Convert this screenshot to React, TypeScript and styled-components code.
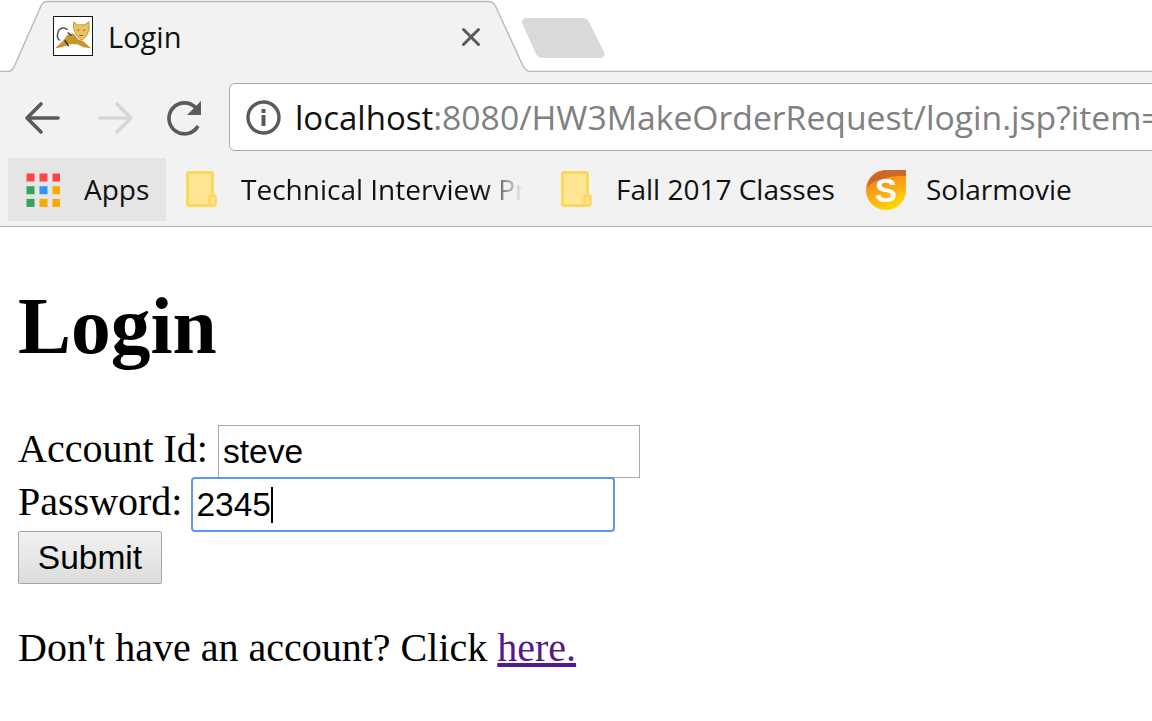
import React from 'react';
import styled, { createGlobalStyle } from 'styled-components';

const GlobalStyle = createGlobalStyle`
    html, body { margin: 0; padding: 0; background: #fff; overflow: hidden; }
`;

const uiFont = `"Open Sans", "Noto Sans", sans-serif`;
const pageFont = `"Liberation Serif", serif`;
const fieldFont = `"Liberation Sans", sans-serif`;

const Browser = styled.div`
    width: 1152px;
    height: 721px;
    overflow: hidden;
    display: flex;
    flex-direction: column;
`;

const TabStrip = styled.div`
    height: 72px;
    flex: none;
    display: flex;
    align-items: flex-start;
    position: relative;
    background: #fff;
`;

const TabShape = styled.svg`
    position: absolute;
    left: 0;
    top: 0;
`;

const Tab = styled.div`
    position: relative;
    height: 72px;
    padding-left: 53px;
    display: flex;
    align-items: center;
    font-family: ${uiFont};
    font-size: 29px;
    color: #111;
`;

const TabTitle = styled.span`
    margin-left: 15px;
    width: 353px;
`;

const CloseIcon = styled.svg`
    flex: none;
    margin-top: 2px;
`;

const Toolbar = styled.div`
    height: 85px;
    flex: none;
    background: #f2f2f2;
    display: flex;
    align-items: center;
    padding: 5px 0 0 24px;
    box-sizing: border-box;
`;

const NavIcon = styled.svg<{ $gap: number }>`
    flex: none;
    margin-top: 2px;
    margin-right: ${p => p.$gap}px;
`;

const Omnibox = styled.div`
    flex: none;
    width: 1000px;
    height: 68px;
    box-sizing: border-box;
    background: #fff;
    border: 1px solid #ababab;
    border-radius: 6px;
    display: flex;
    align-items: center;
    padding-left: 16px;
    font-family: ${uiFont};
    font-size: 33.7px;
    white-space: nowrap;
    overflow: hidden;
`;

const Host = styled.span`
    color: #111;
    font-size: 33px;
    margin-left: 14px;
`;

const UrlRest = styled.span`
    color: #808080;
`;

const BookmarkBar = styled.div`
    height: 70px;
    flex: none;
    background: #f2f2f2;
    border-bottom: 1px solid #b4b4b4;
    box-sizing: border-box;
    display: flex;
    align-items: flex-start;
    padding: 1px 0 0 8px;
    font-family: ${uiFont};
    font-size: 28px;
    color: #111;
`;

const Bookmark = styled.div<{ $active?: boolean; $width: number; $pad: number }>`
    width: ${p => p.$width}px;
    height: 63px;
    flex: none;
    box-sizing: border-box;
    display: flex;
    align-items: center;
    padding-left: ${p => p.$pad}px;
    white-space: nowrap;
    overflow: hidden;
    background: ${p => (p.$active ? '#e5e5e5' : 'transparent')};
`;

const BookmarkLabel = styled.span<{ $gap: number }>`
    margin-left: ${p => p.$gap}px;
    margin-bottom: 2px;
`;

const FadedLabel = styled(BookmarkLabel)`
    width: 282px;
    overflow: hidden;
    -webkit-mask-image: linear-gradient(to right, #000 86%, transparent 100%);
    mask-image: linear-gradient(to right, #000 86%, transparent 100%);
`;

const Page = styled.main`
    flex: 1;
    padding: 0 18px;
    font-family: ${pageFont};
    font-size: 40px;
    color: #000;
`;

const Heading = styled.h1`
    margin: 54px 0 54px;
    font-size: 79.5px;
    line-height: 91px;
    font-weight: bold;
`;

const FormRow = styled.div`
    display: flex;
    align-items: flex-start;
    height: 53px;
    line-height: 45px;

    & + & {
        margin-top: -1px;
        line-height: 47px;
    }
`;

const Label = styled.label`
    margin-right: 10px;
    white-space: nowrap;
`;

const Field = styled.div<{ $focused?: boolean; $width: number }>`
    width: ${p => p.$width}px;
    height: ${p => (p.$focused ? 55 : 53)}px;
    margin: -1px 0 0 ${p => (p.$focused ? -1 : 0)}px;
    box-sizing: border-box;
    padding-left: ${p => (p.$focused ? 3 : 4)}px;
    border: ${p => (p.$focused ? '2px solid #5b95f5' : '1px solid #a9a9a9')};
    border-radius: ${p => (p.$focused ? 4 : 0)}px;
    background: #fff;
    font-family: ${fieldFont};
    font-size: 33.5px;
    line-height: 51px;
    display: flex;
    align-items: center;
`;

const Caret = styled.span`
    display: block;
    width: 2px;
    height: 36px;
    background: #000;
`;

const SubmitButton = styled.button`
    display: block;
    width: 144px;
    height: 53px;
    padding: 0;
    box-sizing: border-box;
    border: 1px solid #a6a6a6;
    border-radius: 2px;
    background: linear-gradient(to bottom, #f2f2f2, #dcdcdc);
    font-family: ${fieldFont};
    font-size: 33.5px;
    color: #000;
`;

const Footer = styled.p`
    margin: 39px 0 0;
    line-height: 49px;
    white-space: nowrap;
`;

const Link = styled.a`
    color: #551a8b;
    text-decoration: underline;
`;

function TomcatIcon() {
    return (
        <svg width="40" height="40" viewBox="0 0 41 41" style={{ flex: 'none' }}>
            <rect x="0.5" y="0.5" width="40" height="40" fill="#fff" stroke="#111" />
            <path d="M2 33 L10 26 L15 19 L21 18 L26 24 L31 26 L39 33 L31 32 L25 29 L17 29 L9 32 Z" fill="#c8962f" />
            <path d="M21 6 L25 9 L32 9 L37 6 L37 14 L34 21 L29 25 L24 20 L21 13 Z" fill="#ecc35a" stroke="#a77f26" strokeWidth="0.7" />
            <path d="M15 14 C11 11 6 12 5 17 C4 21 5 24 7 25" fill="none" stroke="#555" strokeWidth="1.5" />
            <path d="M12 25 L16 31" stroke="#222" strokeWidth="1.4" />
            <path d="M15 17 L19 20" stroke="#333" strokeWidth="1.2" />
            <path d="M25 14 L27 15 M31 15 L33 14 M27 20 L31 20" stroke="#7a5a18" strokeWidth="0.9" />
        </svg>
    );
}

function FolderIcon() {
    return (
        <svg width="32" height="38" viewBox="0 0 32 38" style={{ flex: 'none' }}>
            <rect x="1.5" y="1.5" width="25" height="33" rx="1.5" fill="#ffe591" stroke="#fbd75b" strokeWidth="3" />
            <rect x="23.5" y="24.5" width="6" height="10" rx="1.5" fill="#ffe591" stroke="#fbd75b" strokeWidth="2.4" />
        </svg>
    );
}

function AppsIcon() {
    const colors = ['#f44', '#f44', '#f44', '#34a35f', '#2f96f7', '#fba900', '#34a35f', '#fba900', '#fba900'];
    return (
        <svg width="34" height="34" viewBox="0 0 34 34" style={{ flex: 'none' }}>
            {colors.map((color, i) => (
                <rect key={i} x={(i % 3) * 13 + 0.5} y={Math.floor(i / 3) * 12.7 + 0.5} width="8" height="8" fill={color} />
            ))}
        </svg>
    );
}

function SolarIcon() {
    return (
        <svg width="40" height="40" viewBox="0 0 40 40" style={{ flex: 'none' }}>
            <defs>
                <linearGradient id="solar" x1="0" y1="0" x2="0.4" y2="1">
                    <stop offset="0.3" stopColor="#f58a1f" />
                    <stop offset="0.75" stopColor="#fdb60f" />
                    <stop offset="1" stopColor="#ffd400" />
                </linearGradient>
            </defs>
            <path d="M40 0 V20 A20 20 0 1 1 20 0 Z" fill="url(#solar)" />
            <path d="M20 0 H40 V6 C26 5 10 9 1 17 A20 20 0 0 1 20 0 Z" fill="#c9692a" />
            <text x="20" y="32" textAnchor="middle" fontFamily="Liberation Sans, sans-serif" fontWeight="bold" fontSize="33" fill="#fff">S</text>
        </svg>
    );
}

function App() {
    return (
        <Browser>
            <GlobalStyle />
            <TabStrip>
                <TabShape width="1152" height="72" viewBox="0 0 1152 72">
                    <path
                        d="M0 71.5 H7 Q12 71.5 14 67 L41 6 Q43 1.5 48 1.5 H488 Q493 1.5 495.5 6 L523 66 Q526 71.5 531 71.5 H1152 V72 H0 Z"
                        fill="#f2f2f2"
                    />
                    <path
                        d="M0 71.5 H7 Q12 71.5 14 67 L41 6 Q43 1.5 48 1.5 H488 Q493 1.5 495.5 6 L523 66 Q526 71.5 531 71.5 H1152"
                        fill="none"
                        stroke="#b9b9b9"
                        strokeWidth="1.4"
                    />
                    <path d="M522 23 Q522 18 527 18 H582 Q587 18 589 22 L604 52 Q606 58 600 58 H543 Q538 58 536 54 Z" fill="#d9d9d9" />
                </TabShape>
                <Tab>
                    <TomcatIcon />
                    <TabTitle>Login</TabTitle>
                    <CloseIcon width="20" height="20" viewBox="0 0 20 20">
                        <path d="M2.5 2.5 L17.5 17.5 M17.5 2.5 L2.5 17.5" stroke="#5a5a5a" strokeWidth="3" strokeLinecap="round" />
                    </CloseIcon>
                </Tab>
            </TabStrip>
            <Toolbar>
                <NavIcon $gap={34} width="38" height="34" viewBox="0 0 38 34">
                    <path d="M34 17 H4 M17 3 L3 17 L17 31" fill="none" stroke="#5a5a5a" strokeWidth="3.6" strokeLinecap="round" strokeLinejoin="round" />
                </NavIcon>
                <NavIcon $gap={32} width="38" height="34" viewBox="0 0 38 34">
                    <path d="M4 17 H34 M21 3 L35 17 L21 31" fill="none" stroke="#d6d6d6" strokeWidth="3.6" strokeLinecap="round" strokeLinejoin="round" />
                </NavIcon>
                <NavIcon $gap={25} width="38" height="36" viewBox="0 0 38 36">
                    <path d="M30 8 A15.5 15.5 0 1 0 32 26" fill="none" stroke="#5a5a5a" strokeWidth="3.6" />
                    <path d="M35 1 V15 H21 Z" fill="#5a5a5a" />
                </NavIcon>
                <Omnibox>
                    <svg width="35" height="35" viewBox="0 0 35 35" style={{ flex: 'none' }}>
                        <circle cx="17.5" cy="17.5" r="15.5" fill="none" stroke="#5a5a5a" strokeWidth="3.4" />
                        <rect x="15.5" y="15" width="4" height="11" fill="#5a5a5a" />
                        <rect x="15.5" y="9" width="4" height="4" fill="#5a5a5a" />
                    </svg>
                    <Host>localhost</Host>
                    <UrlRest>:8080/HW3MakeOrderRequest/login.jsp?item=</UrlRest>
                </Omnibox>
            </Toolbar>
            <BookmarkBar>
                <Bookmark $active $width={158} $pad={18}>
                    <AppsIcon />
                    <BookmarkLabel $gap={24}>Apps</BookmarkLabel>
                </Bookmark>
                <Bookmark $width={374} $pad={20}>
                    <FolderIcon />
                    <FadedLabel $gap={23}>Technical Interview Prep</FadedLabel>
                </Bookmark>
                <Bookmark $width={308} $pad={21}>
                    <FolderIcon />
                    <BookmarkLabel $gap={23}>Fall 2017 Classes</BookmarkLabel>
                </Bookmark>
                <Bookmark $width={296} $pad={18}>
                    <SolarIcon />
                    <BookmarkLabel $gap={20}>Solarmovie</BookmarkLabel>
                </Bookmark>
            </BookmarkBar>
            <Page>
                <Heading>Login</Heading>
                <FormRow>
                    <Label>Account Id:</Label>
                    <Field $width={422}>steve</Field>
                </FormRow>
                <FormRow>
                    <Label>Password:</Label>
                    <Field $focused $width={424}>2345<Caret /></Field>
                </FormRow>
                <SubmitButton type="button">Submit</SubmitButton>
                <Footer>Don't have an account? Click <Link href="#">here.</Link></Footer>
            </Page>
        </Browser>
    );
}

export default App;
